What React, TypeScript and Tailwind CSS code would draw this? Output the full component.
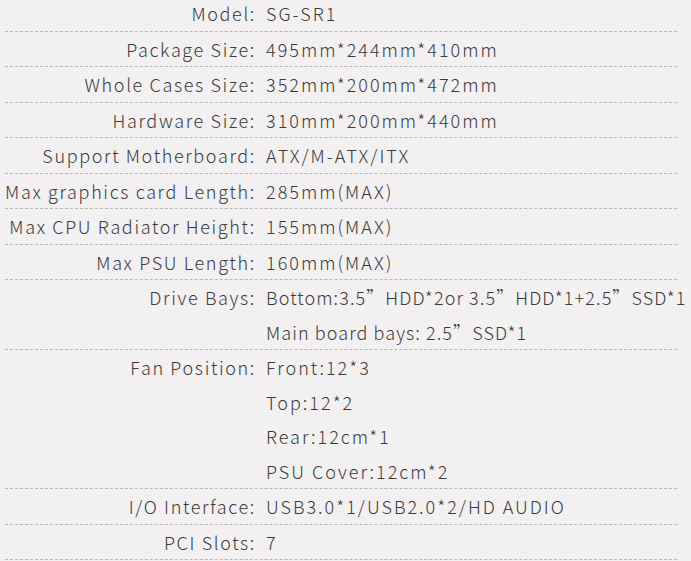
import React from 'react';

interface SpecRow {
  label: string;
  values: string[];
  tight?: boolean;
}

const specs: SpecRow[] = [
  { label: 'Model:', values: ['SG-SR1'] },
  { label: 'Package Size:', values: ['495mm*244mm*410mm'] },
  { label: 'Whole Cases Size:', values: ['352mm*200mm*472mm'] },
  { label: 'Hardware Size:', values: ['310mm*200mm*440mm'] },
  { label: 'Support Motherboard:', values: ['ATX/M-ATX/ITX'] },
  { label: 'Max graphics card Length:', values: ['285mm(MAX)'] },
  { label: 'Max CPU Radiator Height:', values: ['155mm(MAX)'] },
  { label: 'Max PSU Length:', values: ['160mm(MAX)'] },
  {
    label: 'Drive Bays:',
    values: ['Bottom:3.5”HDD*2or 3.5”HDD*1+2.5”SSD*1', 'Main board bays: 2.5”SSD*1'],
    tight: true,
  },
  {
    label: 'Fan Position:',
    values: ['Front:12*3', 'Top:12*2', 'Rear:12cm*1', 'PSU Cover:12cm*2'],
  },
  { label: 'I/O Interface:', values: ['USB3.0*1/USB2.0*2/HD AUDIO'] },
  { label: 'PCI Slots:', values: ['7'] },
];

export default function App() {
  return (
    <div
      className="w-[691px] h-[561px] overflow-hidden bg-[#f2f0f1] text-[#3a3a3a] text-[18px] font-light"
      style={{ fontFamily: '"Noto Sans CJK JP", "Noto Sans", sans-serif' }}
    >
      <div className="-mt-[4px] ml-[5px] w-[672px]">
        {specs.map((row) => (
          <div
            key={row.label}
            className="flex border-b border-dashed border-[#b9b7b8] leading-[34.5px]"
          >
            <div className="w-[251px] shrink-0 flex justify-end whitespace-nowrap tracking-[1.65px]">
              {row.label}
            </div>
            {/* drive bay lines use the SC font so the ” sits full width */}
            <div
              className={
                row.tight
                  ? 'pl-[10px] whitespace-nowrap tracking-[1.1px] font-["Noto_Sans_CJK_SC",sans-serif]'
                  : 'pl-[10px] whitespace-nowrap tracking-[2px]'
              }
            >
              {row.values.map((v) => (
                <div key={v}>{v}</div>
              ))}
            </div>
          </div>
        ))}
      </div>
    </div>
  );
}
